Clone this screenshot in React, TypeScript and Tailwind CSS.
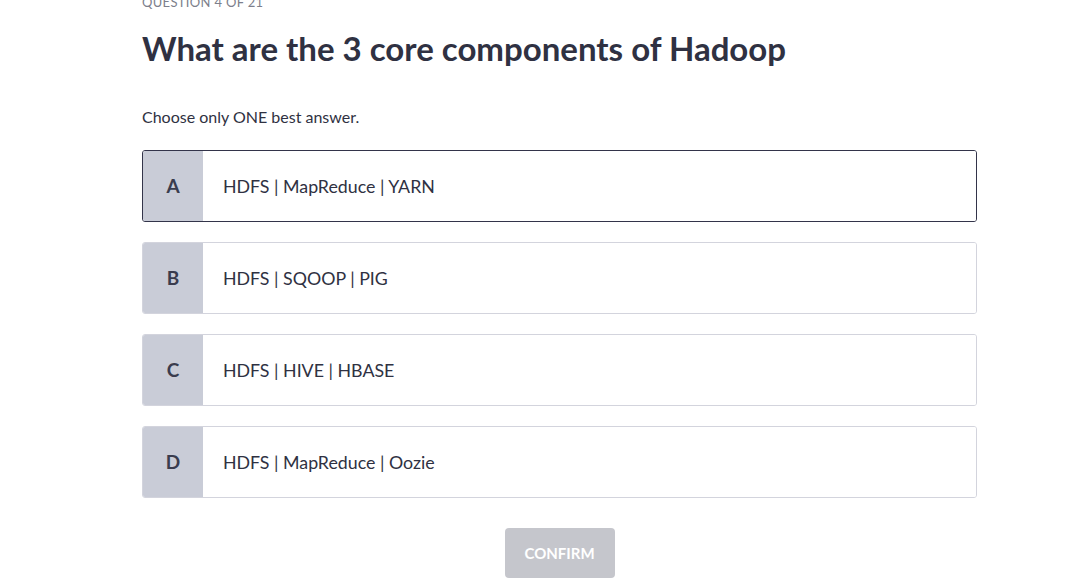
const options = [
  { key: "A", text: "HDFS | MapReduce | YARN", selected: true },
  { key: "B", text: "HDFS | SQOOP | PIG", selected: false },
  { key: "C", text: "HDFS | HIVE | HBASE", selected: false },
  { key: "D", text: "HDFS | MapReduce | Oozie", selected: false },
];

export default function App() {
  return (
    <div className="min-h-screen bg-white font-['Lato',sans-serif] text-[#2f3142]">
      <div className="ml-[142px] w-[835px] -mt-[6px]">
        <div className="text-[13px] leading-[16px] tracking-wide text-[#7d7f8c] uppercase">
          Question 4 of 21
        </div>
        <h1 className="mt-[16px] text-[33px] leading-[44px] font-bold text-[#2f3142]">
          What are the 3 core components of Hadoop
        </h1>
        <p className="mt-[37px] text-[16px] leading-[20px] text-[#2f3142]">Choose only ONE best answer.</p>

        <div className="mt-[23px] flex flex-col gap-[20px]">
          {options.map((o) => (
            <div
              key={o.key}
              className={
                "flex h-[72px] overflow-hidden rounded-[3px] border " +
                (o.selected ? "border-[#33344a]" : "border-[#d3d4dd]")
              }
            >
              <div className="flex w-[60px] items-center justify-center bg-[#c9ccd7] text-[19px] font-bold text-[#3a3c4e]">
                {o.key}
              </div>
              <div className="flex flex-1 items-center bg-white pl-[20px] text-[17.8px] text-[#2f3142]">
                {o.text}
              </div>
            </div>
          ))}
        </div>

        <div className="mt-[30px] flex justify-center">
          <button className="h-[50px] w-[110px] rounded-[4px] bg-[#c5c6cc] text-[15px] font-bold text-white">
            CONFIRM
          </button>
        </div>
      </div>
    </div>
  );
}
